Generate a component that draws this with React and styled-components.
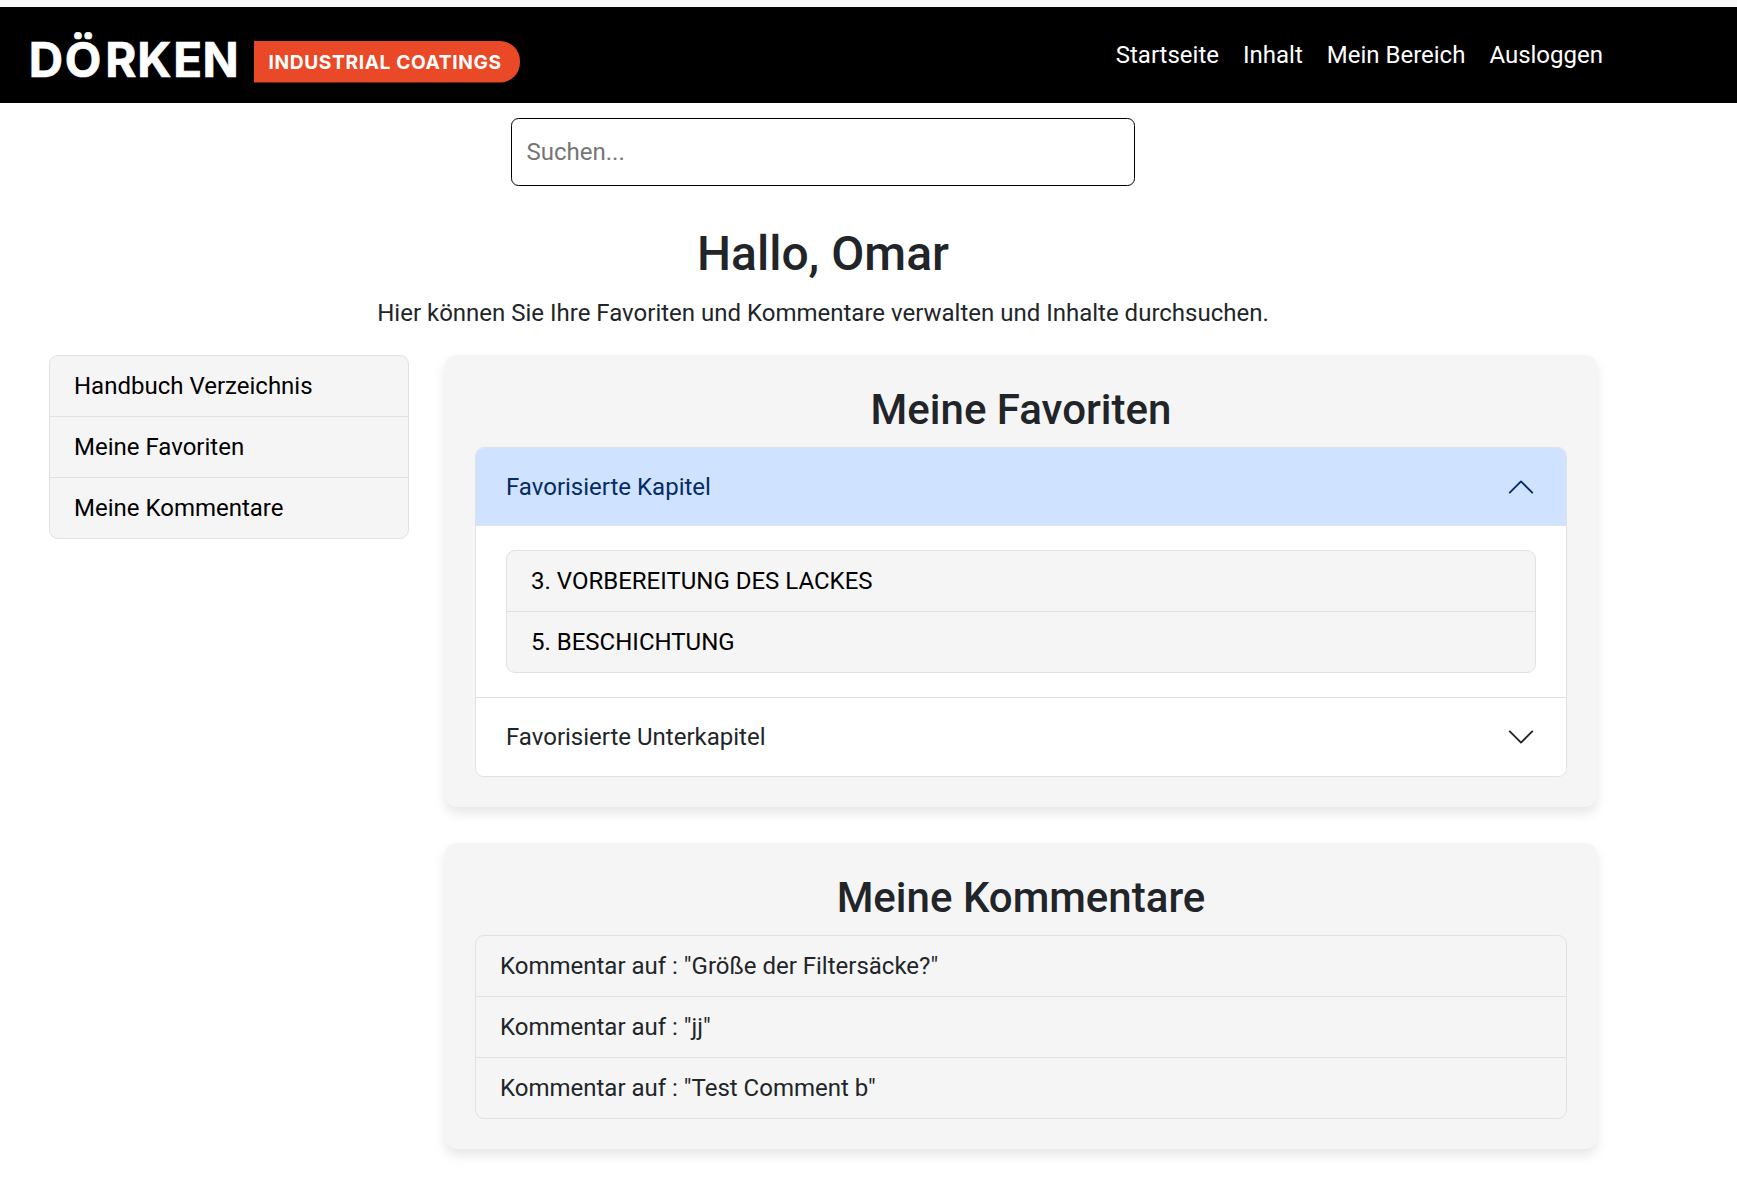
import React, { useState } from "react";
import styled, { createGlobalStyle } from "styled-components";

const GlobalStyle = createGlobalStyle`
  *, *::before, *::after { box-sizing: border-box; }
  body {
    margin: 0;
    background: #fff;
    color: #212529;
    font: 400 24px/36px Roboto, "Liberation Sans", sans-serif;
  }
  h1, h2, p, ul { margin: 0; padding: 0; }
`;

const TopStrip = styled.div`
  height: 7px;
  background: #f7f7f7;
`;

const Navbar = styled.header`
  display: flex;
  align-items: center;
  justify-content: space-between;
  height: 96px;
  padding: 0 134px 0 20px;
  background: #000;
`;

const LogoArt = styled.svg`
  display: block;
  flex: none;
  font-family: Inter, sans-serif;
`;

const Nav = styled.nav`
  display: flex;
  gap: 24px;
`;

const NavLink = styled.a`
  color: #fff;
  text-decoration: none;
`;

const Page = styled.main`
  width: 1646px;
  padding: 15px 49px 37px;
`;

const SearchInput = styled.input`
  display: block;
  width: 624px;
  height: 68px;
  margin: 0 auto;
  padding: 0 14.5px;
  border: 1px solid #000;
  border-radius: 7.5px;
  background: #fff;
  color: #212529;
  font: inherit;
  &::placeholder { color: #757575; opacity: 1; }
`;

const Intro = styled.section`
  padding: 39px 0 24px;
  text-align: center;
`;

const Greeting = styled.h1`
  margin-bottom: 12px;
  font-size: 48px;
  font-weight: 500;
  line-height: 58px;
`;

const Columns = styled.div`
  display: grid;
  grid-template-columns: 360px 1152px;
  gap: 36px;
  align-items: start;
`;

const CardStack = styled.div`
  display: grid;
  gap: 36px;
`;

const Card = styled.section`
  padding: 30px;
  border-radius: 12px;
  background: #f5f5f5;
  box-shadow: 0 6px 12px rgba(0, 0, 0, 0.1);
`;

const CardTitle = styled.h2`
  margin-bottom: 12px;
  font-size: 42px;
  font-weight: 500;
  line-height: 50px;
  text-align: center;
`;

const List = styled.ul`
  list-style: none;
  overflow: hidden;
  border: 1px solid #dee2e6;
  border-radius: 9px;
  background: #f5f5f5;
`;

const ListItem = styled.li`
  padding: 12px 24px;
  color: ${({ $color }) => $color || "#000"};
  & + & { border-top: 1px solid #dee2e6; }
`;

const Accordion = styled.div`
  overflow: hidden;
  border: 1px solid #dee2e6;
  border-radius: 9px;
  background: #fff;
`;

const AccordionItem = styled.div`
  & + & { border-top: 1px solid #dee2e6; }
`;

const AccordionButton = styled.button`
  display: flex;
  align-items: center;
  justify-content: space-between;
  width: 100%;
  height: 78px;
  padding: 0 30px;
  border: 0;
  background: ${({ $open }) => ($open ? "#cfe2ff" : "#fff")};
  color: ${({ $open }) => ($open ? "#052c65" : "#212529")};
  box-shadow: ${({ $open }) => ($open ? "inset 0 -1px 0 #dee2e6" : "none")};
  font: inherit;
  text-align: left;
`;

const Chevron = styled.svg`
  width: 30px;
  height: 30px;
  transform: ${({ $open }) => ($open ? "rotate(180deg)" : "none")};
`;

const AccordionBody = styled.div`
  padding: 24px 30px;
`;

function Logo() {
  return (
    <LogoArt width="502" height="84" viewBox="0 -13 502 84" role="img" aria-label="Dörken Industrial Coatings">
      <text x="8.700 44.700 85.300 117.200 153.300 182.500" y="51" fontSize="47.500" fontWeight="700" fill="#fff" stroke="#fff" strokeWidth="0.7">DÖRKEN</text>
      <path d="M234 15h246a20 20 0 0 1 20 20v1.500a20 20 0 0 1-20 20H234z" fill="#e94926" />
      <text x="248.500" y="43" fontSize="19.200" fontWeight="700" fill="#fff" textLength="232.500" lengthAdjust="spacing">INDUSTRIAL COATINGS</text>
    </LogoArt>
  );
}

function ItemList({ items, color }) {
  return (
    <List>
      {items.map((item) => (
        <ListItem key={item} $color={color}>{item}</ListItem>
      ))}
    </List>
  );
}

function Section({ title, open, onToggle, children }) {
  return (
    <AccordionItem>
      <AccordionButton type="button" $open={open} aria-expanded={open} onClick={onToggle}>
        {title}
        <Chevron $open={open} viewBox="0 0 16 16" fill="none" stroke="currentColor" strokeLinecap="round" strokeLinejoin="round">
          <path d="m2 5 6 6 6-6" />
        </Chevron>
      </AccordionButton>
      {open && <AccordionBody>{children}</AccordionBody>}
    </AccordionItem>
  );
}

const navLinks = ["Startseite", "Inhalt", "Mein Bereich", "Ausloggen"];
const menu = ["Handbuch Verzeichnis", "Meine Favoriten", "Meine Kommentare"];
const chapters = ["3. VORBEREITUNG DES LACKES", "5. BESCHICHTUNG"];
const comments = [
  'Kommentar auf : "Größe der Filtersäcke?"',
  'Kommentar auf : "jj"',
  'Kommentar auf : "Test Comment b"',
];

export default function App() {
  const [openSection, setOpenSection] = useState("chapters");
  const toggle = (name) => setOpenSection(openSection === name ? null : name);

  return (
    <>
      <GlobalStyle />
      <TopStrip />
      <Navbar>
        <Logo />
        <Nav>
          {navLinks.map((label) => (
            <NavLink key={label} href="#">{label}</NavLink>
          ))}
        </Nav>
      </Navbar>
      <Page>
        <SearchInput placeholder="Suchen..." />
        <Intro>
          <Greeting>Hallo, Omar</Greeting>
          <p>Hier können Sie Ihre Favoriten und Kommentare verwalten und Inhalte durchsuchen.</p>
        </Intro>
        <Columns>
          <ItemList items={menu} />
          <CardStack>
            <Card>
              <CardTitle>Meine Favoriten</CardTitle>
              <Accordion>
                <Section title="Favorisierte Kapitel" open={openSection === "chapters"} onToggle={() => toggle("chapters")}>
                  <ItemList items={chapters} />
                </Section>
                <Section title="Favorisierte Unterkapitel" open={openSection === "subchapters"} onToggle={() => toggle("subchapters")} />
              </Accordion>
            </Card>
            <Card>
              <CardTitle>Meine Kommentare</CardTitle>
              <ItemList items={comments} color="#212529" />
            </Card>
          </CardStack>
        </Columns>
      </Page>
    </>
  );
}
